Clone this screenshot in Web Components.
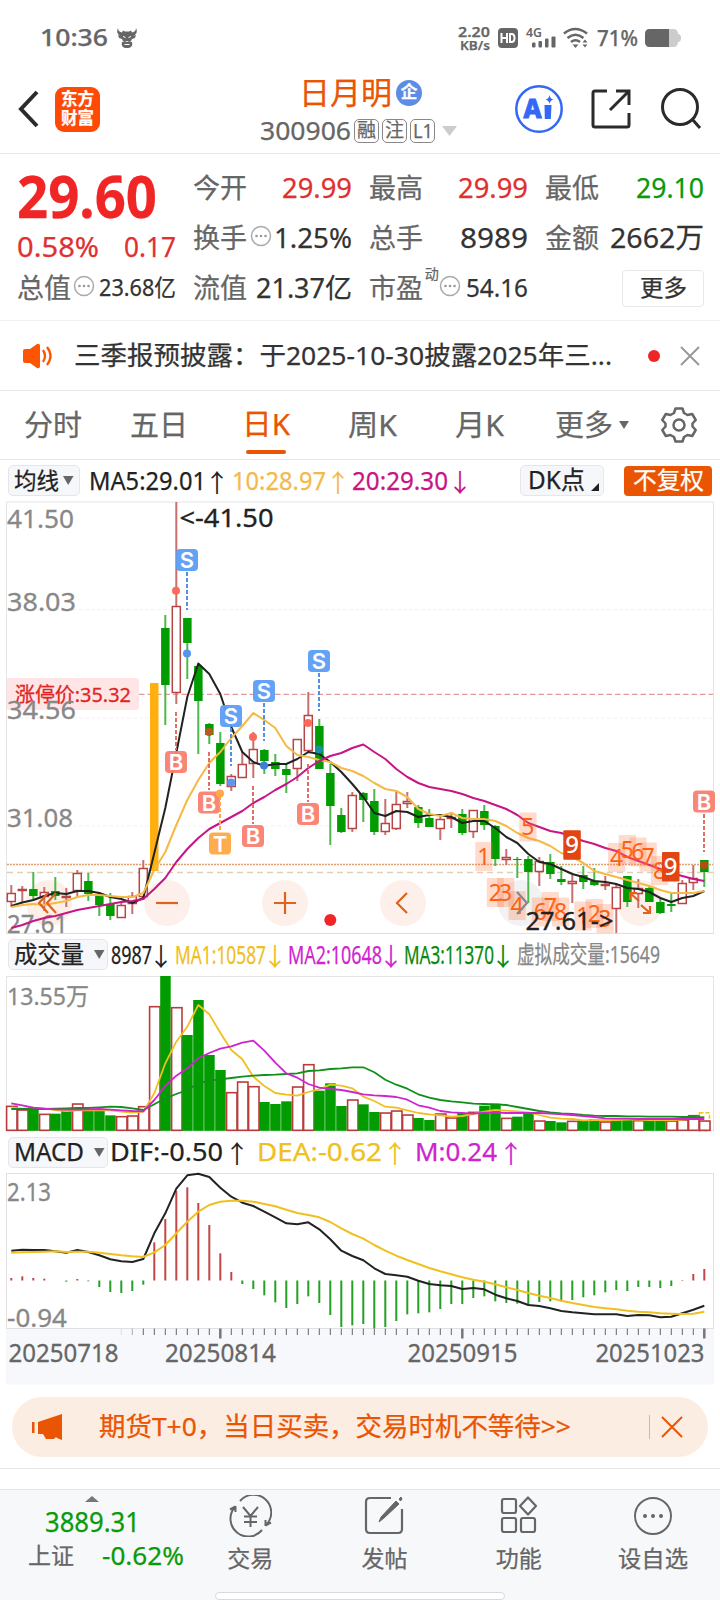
<!DOCTYPE html>
<html lang="zh-CN">
<head>
<meta charset="utf-8">
<title>日月明 300906</title>
<style>
  body {
    margin: 0;
    width: 720px;
    height: 1600px;
    overflow: hidden;
    background: #fff;
    color: #333;
    font-family: "Noto Sans", "Liberation Sans", "Noto Sans CJK SC", sans-serif;
    --red: #e03030;
    --green: #0a9a0a;
    --orange: #ea5504;
    --grey: #666;
    --line: #e6e6e6;
  }
</style>
</head>
<body>
<status-bar></status-bar>
<stock-header></stock-header>
<quote-panel></quote-panel>
<notice-bar></notice-bar>
<period-tabs></period-tabs>

<indicator-row style="height:41px">
  <pick-button w="72" caret="4"><fit-text w="45" s="23">均线</fit-text></pick-button>
  <fit-text w="117" s="26" ml="9">MA5:29.01</fit-text><trend-arrow ml="5">↑</trend-arrow>
  <fit-text w="94" s="26" ml="9" style="color:#f5b94a">10:28.97</fit-text><trend-arrow ml="6" style="color:#f5b94a">↑</trend-arrow>
  <fit-text w="96" s="26" ml="8" style="color:#c71585">20:29.30</fit-text><trend-arrow ml="6" style="color:#c71585">↓</trend-arrow>
  <pick-button w="84" style="margin-left:54px" corner><fit-text w="57" s="25" ml="2">DK点</fit-text></pick-button>
  <solid-button style="margin-left:20px"><fit-text w="71" s="24">不复权</fit-text></solid-button>
</indicator-row>
<k-chart></k-chart>

<indicator-row style="height:43px">
  <pick-button w="100" caret="10"><fit-text w="70" s="24">成交量</fit-text></pick-button>
  <fit-text w="41" s="26" ml="3">8987</fit-text><trend-arrow w="10" ml="4">↓</trend-arrow>
  <fit-text w="91" s="26" ml="9" style="color:#f0c020">MA1:10587</fit-text><trend-arrow w="10" ml="4" style="color:#f0c020">↓</trend-arrow>
  <fit-text w="94" s="26" ml="8" style="color:#cf25cf">MA2:10648</fit-text><trend-arrow w="10" ml="4" style="color:#cf25cf">↓</trend-arrow>
  <fit-text w="90" s="26" ml="8" style="color:#0a8a0a">MA3:11370</fit-text><trend-arrow w="10" ml="4" style="color:#0a8a0a">↓</trend-arrow>
  <fit-text w="143" s="24" ml="9" style="color:#888">虚拟成交量:15649</fit-text>
</indicator-row>
<volume-chart></volume-chart>

<indicator-row style="height:42px">
  <pick-button w="100" caret="10"><fit-text w="70" s="25">MACD</fit-text></pick-button>
  <fit-text w="113" s="26" ml="2">DIF:-0.50</fit-text><trend-arrow ml="8">↑</trend-arrow>
  <fit-text w="125" s="26" ml="14" style="color:#f0c020">DEA:-0.62</fit-text><trend-arrow ml="7" style="color:#f0c020">↑</trend-arrow>
  <fit-text w="82" s="26" ml="14" style="color:#cf25cf">M:0.24</fit-text><trend-arrow ml="8" style="color:#cf25cf">↑</trend-arrow>
</indicator-row>
<macd-chart></macd-chart>

<promo-banner></promo-banner>
<bottom-nav></bottom-nav>

<script>
// Registers an element whose shadow root is cloned from one template.
function define(name, html) {
  const tpl = document.createElement('template');
  tpl.innerHTML = html;
  customElements.define(name, class extends HTMLElement {
    constructor() {
      super();
      this.attachShadow({ mode: 'open' }).appendChild(tpl.content.cloneNode(true));
    }
  });
}

define('status-bar', `
  <style>
    :host { display: flex; align-items: center; box-sizing: border-box; height: 76px; padding: 0 39px 0 40px; color: #666; font-weight: 500; }
    svg { display: block; flex: none; overflow: visible; }
    .gap { flex: 1; }
    .rate { display: grid; justify-items: end; font-weight: 600; }
  </style>
  <fit-text w="68" s="24">10:36</fit-text>
  <svg width="22" height="22" viewBox="0 0 22 22" style="margin-left:8px" fill="#666">
    <path d="M2 1c0 3 2 4 4 4.500l1-2 2 1h4l2-1 1 2c2-.5 4-1.500 4-4.500 2 4 0 7-3 8l3-1-1 3-3 1-1 2H7l-1-2-3-1-1-3 3 1C2 8 0 5 2 1z"/>
    <path d="M6 15l3-1 2 1 2-1 3 1c1 4-1 6-5 6s-6-2-5-6z"/><path d="M7 9.500l2.500 1M15 9.500l-2.500 1M8.500 17.500h5" stroke="#fff"/>
  </svg>
  <div class="gap"></div>
  <div class="rate"><fit-text w="32" s="15" lh="16">2.20</fit-text><fit-text w="30" s="13" lh="13">KB/s</fit-text></div>
  <svg width="20" height="20" style="margin-left:8px"><rect width="20" height="20" rx="4" fill="#666"/>
    <path d="M3.500 5v10M9 5v10M3.500 10H9M12 6v8h1.500q3 0 3-4t-3-4z" stroke="#fff" stroke-width="2" fill="none"/></svg>
  <svg width="32" height="22" viewBox="0 0 32 22" style="margin-left:8px" fill="#666">
    <text x="0" y="10" font-size="13" font-weight="600" textLength="16" lengthAdjust="spacingAndGlyphs">4G</text>
    <rect x="6" y="15.500" width="3.500" height="5" rx="1"/><rect x="12.500" y="14" width="3.500" height="6.500" rx="1"/><rect x="19" y="11.500" width="3.500" height="9" rx="1"/><rect x="25.500" y="9.500" width="4" height="11" rx="1"/>
  </svg>
  <svg width="26" height="22" viewBox="0 0 26 22" style="margin-left:5px" fill="none" stroke="#666" stroke-width="2.600">
    <path d="M1 6.500q11-9 23 0M4.500 11q8-6.500 16 0M8 15q4.500-3.500 9 0"/><path d="M9.500 17.500h6l-3 3.500z" fill="#666" stroke="none"/><path d="M19.500 15.500h5l-2.500-3zM19.500 17.500h5l-2.500 3z" fill="#666" stroke="none"/>
  </svg>
  <fit-text w="41" s="22" ml="8">71%</fit-text>
  <svg width="36" height="18" style="margin-left:7px"><path d="M5 0h23q5 0 5 5 3 0 3 4t-3 4q0 5-5 5H5q-5 0-5-5V5q0-5 5-5z" fill="#ccc"/><path d="M5 0h19v18H5q-5 0-5-5V5q0-5 5-5z" fill="#666"/></svg>
`);

define('stock-header', `
  <style>
    :host { display: grid; grid-template-columns: 240px 1fr 210px; box-sizing: border-box; height: 78px; border-bottom: 1px solid var(--line); }
    .side { display: flex; align-items: center; height: 66px; }
    svg { display: block; flex: none; }
    .logo { display: grid; align-content: center; justify-content: center; width: 45px; height: 45px; margin-left: 16px; border-radius: 9px; background: #ff4a05; color: #fff; font-weight: 700; }
    .row { display: flex; align-items: center; }
    .name { height: 33px; color: var(--orange); }
    .code { height: 44px; color: var(--grey); }
    .chip { display: grid; place-items: center; box-sizing: border-box; width: 25px; height: 24px; margin-left: 3px; border: 1px solid #888; border-radius: 5px; }
    .badge { display: grid; place-items: center; width: 26px; height: 26px; margin-left: 4px; border-radius: 50%; background: #5b8ce6; color: #fff; font-weight: 700; }
  </style>
  <div class="side">
    <svg width="22" height="38" style="margin-left:17px"><path d="M20 2L4 19l16 17" fill="none" stroke="#2b2b2b" stroke-width="4"/></svg>
    <div class="logo"><fit-text w="33" s="17" lh="19">东方</fit-text><fit-text w="33" s="17" lh="19">财富</fit-text></div>
  </div>
  <div>
    <div class="row name"><fit-text w="93" s="31" ml="59">日月明</fit-text><div class="badge"><fit-text w="17" s="17">企</fit-text></div></div>
    <div class="row code"><fit-text w="91" s="25" ml="20">300906</fit-text>
      <div class="chip"><fit-text w="19" s="19">融</fit-text></div><div class="chip"><fit-text w="19" s="19">注</fit-text></div><div class="chip"><fit-text w="20" s="20">L1</fit-text></div>
      <svg width="16" height="11" style="margin-left:7px"><path d="M0 0h15L7.500 10z" fill="#ccc"/></svg></div>
  </div>
  <div class="side">
    <svg width="50" height="50" viewBox="0 0 50 50" style="margin-left:4px">
      <circle cx="25" cy="25" r="22.700" fill="none" stroke="#3567f5" stroke-width="2.500"/>
      <text x="9.500" y="34" font-size="27" font-weight="800" fill="#3567f5" stroke="#3567f5" textLength="18" lengthAdjust="spacingAndGlyphs">A</text>
      <path d="M30.500 21h7l-.7 14h-6z" fill="#3567f5"/><path d="M35.500 11q.7 4 4 4.500-3.300.5-4 4.500-.7-4-4-4.500 3.300-.5 4-4.500z" fill="#3567f5"/>
    </svg>
    <svg width="42" height="42" viewBox="0 0 42 42" style="margin-left:26px" fill="none" stroke="#2b2b2b" stroke-width="3">
      <path d="M17 3H5q-2 0-2 2v32q0 2 2 2h32q2 0 2-2V25M26 3h13v14M38 4L20 22"/></svg>
    <svg width="44" height="44" viewBox="0 0 44 44" style="margin-left:27px" fill="none" stroke="#2b2b2b" stroke-width="3">
      <circle cx="21" cy="20" r="17.500"/><path d="M33 32l8 9"/></svg>
  </div>
`);

define('more-dots', `
  <style>:host { display: block; flex: none; width: 22px; height: 22px; margin-top: -4px; } svg { display: block; }</style>
  <svg width="22" height="22" fill="#999"><circle cx="11" cy="11" r="9.500" fill="none" stroke="#aaa" stroke-width="1.500"/><circle cx="6.500" cy="11" r="1.300"/><circle cx="11" cy="11" r="1.300"/><circle cx="15.500" cy="11" r="1.300"/></svg>
`);

define('quote-panel', `
  <style>
    :host {
      display: grid; grid-template-columns: repeat(4, 159px); grid-template-rows: 50px 50px 50px; column-gap: 17px;
      box-sizing: border-box; height: 167px; padding: 9px 16px 0 17px; border-bottom: 1px solid #f0f0f0;
    }
    .cell { display: flex; align-items: center; justify-content: space-between; }
    .k { color: var(--grey); }
    .up { color: var(--red); }
    .down { color: var(--green); }
    .price { grid-row: span 2; display: flex; flex-direction: column; color: #f02525; }
    .change { display: flex; justify-content: space-between; color: var(--red); margin-top: 1px; }
    button { all: unset; display: grid; place-items: center; box-sizing: border-box; width: 83px; height: 37px; margin-left: 77px; border: 1px solid #e8e8e8; border-radius: 4px; }
    .dyn { align-self: flex-start; margin-top: 4px; margin-left: -3px; }
  </style>
  <div class="price"><fit-text w="140" s="59" lh="67" style="font-weight:700">29.60</fit-text>
    <div class="change"><fit-text w="82" s="28">0.58%</fit-text><fit-text w="52" s="28">0.17</fit-text></div></div>
  <div class="cell"><fit-text class="k" w="54" s="27">今开</fit-text><fit-text class="up" w="70" s="28">29.99</fit-text></div>
  <div class="cell"><fit-text class="k" w="54" s="27">最高</fit-text><fit-text class="up" w="70" s="28">29.99</fit-text></div>
  <div class="cell"><fit-text class="k" w="54" s="27">最低</fit-text><fit-text class="down" w="68" s="28">29.10</fit-text></div>
  <div class="cell"><fit-text class="k" w="54" s="27">换手</fit-text><more-dots></more-dots><fit-text w="78" s="28">1.25%</fit-text></div>
  <div class="cell"><fit-text class="k" w="54" s="27">总手</fit-text><fit-text w="68" s="28">8989</fit-text></div>
  <div class="cell"><fit-text class="k" w="54" s="27">金额</fit-text><fit-text w="94" s="28">2662万</fit-text></div>
  <div class="cell"><fit-text class="k" w="54" s="27">总值</fit-text><more-dots style="margin-left:-2px"></more-dots><fit-text w="77" s="23">23.68亿</fit-text></div>
  <div class="cell"><fit-text class="k" w="54" s="27">流值</fit-text><fit-text w="96" s="27">21.37亿</fit-text></div>
  <div class="cell"><fit-text class="k" w="54" s="27">市盈</fit-text><fit-text class="k dyn" w="14" s="14">动</fit-text><more-dots style="margin-left:-4px"></more-dots><fit-text w="62" s="26">54.16</fit-text></div>
  <div class="cell"><button><fit-text w="47" s="23">更多</fit-text></button></div>
`);

define('notice-bar', `
  <style>
    :host { display: flex; align-items: center; box-sizing: border-box; height: 70px; padding-left: 22px; border-bottom: 1px solid var(--line); }
    svg { display: block; }
    i { width: 12px; height: 12px; margin: 0 20px 0 36px; border-radius: 50%; background: #f02525; }
  </style>
  <svg width="32" height="26" viewBox="0 0 32 26"><path d="M3 6h5l7-5q3-1 3 2v20q0 3-3 2l-7-5H3q-2 0-2-2V8q0-2 2-2z" fill="#ff5500"/><path d="M21 7q4 6 0 12M25 4q7 9 0 18" fill="none" stroke="#ff5500" stroke-width="2.300"/></svg>
  <fit-text w="538" s="26" ml="20">三季报预披露：于2025-10-30披露2025年三...</fit-text>
  <i></i>
  <svg width="20" height="20"><path d="M1 1l18 18M19 1L1 19" stroke="#999" stroke-width="2"/></svg>
`);

define('period-tabs', `
  <style>
    :host { display: flex; align-items: center; box-sizing: border-box; height: 69px; border-bottom: 1px solid var(--line); color: var(--grey); }
    .on { display: grid; justify-items: center; color: var(--orange); }
    .on::after { content: ""; width: 40px; height: 4px; margin-top: 5px; margin-bottom: -9px; border-radius: 2px; background: var(--orange); }
    svg { display: block; }
  </style>
  <fit-text w="58" s="29" ml="24">分时</fit-text>
  <fit-text w="58" s="29" ml="48">五日</fit-text>
  <div class="on" style="margin-left:54px"><fit-text w="48" s="29" lh="40">日K</fit-text></div>
  <fit-text w="49" s="29" ml="58">周K</fit-text>
  <fit-text w="49" s="29" ml="58">月K</fit-text>
  <fit-text w="58" s="29" ml="51">更多</fit-text>
  <svg width="11" height="9" style="margin-left:6px"><path d="M0 0h10L5 8z" fill="#666"/></svg>
  <svg width="36" height="36" viewBox="-18 -18 36 36" style="margin-left:31px" fill="none" stroke="#666" stroke-width="2.500" stroke-linejoin="round">
    <path d="M-3.500-16.500h7l1.500 4.500 3.500 2 4.700-1 3.500 6-3.200 3.500v3l3.200 3.500-3.500 6-4.700-1-3.500 2-1.500 4.500h-7l-1.500-4.500-3.500-2-4.700 1-3.500-6 3.200-3.500v-3l-3.200-3.500 3.500-6 4.700 1 3.500-2z"/><circle r="5.500"/></svg>
`);

define('indicator-row', `
  <style>:host { display: flex; align-items: center; box-sizing: border-box; padding-left: 8px; color: #222; }</style>
  <slot></slot>
`);

customElements.define('pick-button', class extends HTMLElement {
  constructor() {
    super();
    const caret = this.getAttribute('caret');
    this.attachShadow({ mode: 'open' }).innerHTML = `
      <style>
        :host { display: flex; flex: none; align-items: center; box-sizing: border-box; width: ${this.getAttribute('w')}px; height: 31px; padding-left: 5px; border: 1px solid #e4e6ea; border-radius: 5px; background: #f6f7fa; }
        .corner { align-self: flex-end; margin: 0 0 4px 6px; }
      </style>
      <slot></slot>
      ${caret ? `<svg width="11" height="9" style="margin-left:${caret}px"><path d="M0 0h10.500L5.200 9z" fill="#666"/></svg>` : ''}
      ${this.hasAttribute('corner') ? '<svg class="corner" width="8" height="8"><path d="M8 0v8H0z" fill="#222"/></svg>' : ''}`;
  }
});

customElements.define('trend-arrow', class extends HTMLElement {
  constructor() {
    super();
    this.attachShadow({ mode: 'open' }).innerHTML = `
      <style>
        :host { display: flex; flex: none; justify-content: center; width: ${this.getAttribute('w') || 12}px; margin-left: ${this.getAttribute('ml')}px; font: 25px/28px "Noto Sans CJK SC", sans-serif; }
        span { flex: none; }
      </style><span><slot></slot></span>`;
  }
});

define('solid-button', `
  <style>:host { display: grid; place-items: center; width: 88px; height: 30px; border-radius: 4px; background: var(--orange); color: #fff; }</style>
  <slot></slot>
`);

// ---- charts: 64 days, 11px apart ----
const X = i => 11.3 + i * 11;
const line = (ys, color, w = 2) =>
  `<polyline points="${ys.map((y, i) => X(i).toFixed(1) + ',' + y).join(' ')}" fill="none" stroke="${color}" stroke-width="${w}" stroke-linejoin="round"/>`;
const label = (x, y, w, size, text, color = '#888') =>
  `<text x="${x}" y="${y}" font-size="${size}" fill="${color}" stroke="${color}" stroke-width=".3" textLength="${w}" lengthAdjust="spacingAndGlyphs">${text}</text>`;
const third = (base, list) => list.map(v => +(base + v / 3).toFixed(1));

function chart(name, top, height, draw) {
  customElements.define(name, class extends HTMLElement {
    constructor() {
      super();
      this.attachShadow({ mode: 'open' }).innerHTML = `
        <style>:host { display: block; height: ${height}px; } svg { display: block; overflow: visible; }</style>
        <svg width="720" height="${height}" viewBox="0 ${top} 720 ${height}">${draw()}</svg>`;
    }
  });
}

// colour, high, body top, body bottom, low
const candles = `r885,893,902,907 r886,889,891,902 g872,889,896,900 r887,892,897,911 g877,891,896,900 r888,896,897,907 r870,873,891,897 g873,881,894,901
g892,896,905,916 g893,904,916,920 r901,905,918,918 r892,896,904,914 r860,868,897,900 o683,683,871,871 g615,628,685,725 r502,606,693,704
g618,618,643,679 g666,666,701,754 g723,724,735,744 g732,743,784,786 r774,776,787,791 r752,764,778,778 r732,749,764,778 g749,750,761,774
g754,762,769,776 g765,769,775,793 r739,739,769,781 r692,715,751,753 g719,726,769,769 g764,773,806,845 g808,815,832,833 r792,795,829,832
g792,793,800,822 g789,801,832,835 r799,823,832,835 r792,804,829,830 r792,801,804,808 g805,807,823,828 g809,818,827,827 r816,819,829,840
r812,817,818,828 g809,814,833,835 r810,810,832,838 g805,811,825,830 g825,826,859,866 r849,857,860,865 g857,859,860,878 g856,859,872,903
r857,861,872,886 g854,862,874,879 g866,879,882,885 r875,881,884,903 g866,875,882,889 g868,881,885,886 r876,884,886,890 r884,887,909,933
g876,876,902,907 r879,888,894,908 g885,888,902,902 g899,902,913,914 g893,904,906,912 r880,883,904,904 r865,878,883,890 g860,860,872,887`.split(/\s+/);

const ma5 = [906,902.5,900,896,893,894,891,891,893,897,899,903,898,853,808,753,697,663.5,674,694,727,752,762,766,764,764,759,752,754,762,772,784,
  797,813,816,811,812,817,815,815,817,823,821,821,828,837,843,854,862,864,869,874,877,881,882,884,888,889,892,898,902,898,896,891];
const ma10 = [907,905,904,905,903,901,897,895,895,896,897,897,893,870,852,825,800,780,763,752,738,726,713,720,728,746,755,757,760,762,768,771,
  776,783,789,791,797,809,814,816,813,818,819,819,821,826,833,838,841,846,853,857,863,871,874,877,880,883,886,890,893,893,893,891];
const ma20 = [928,925,921,918,916,913,910,908,906,904,902,901,899,889,878,862,849,838,829,823,817,811,803,797,790,784,777,768,761,756,753,748,
  744.5,752,759,769,777,783,787,789,791,794,798,801,805,809,815,823,827,831,833,837,841,844,848,851,857,861,865,869,873,876,879,881];

function candle(s, i) {
  const [hi, top, bot, lo] = s.slice(1).split(',').map(Number);
  const x = X(i);
  if (s[0] === 'o') return `<rect x="${x - 4.3}" y="${top}" width="8.500" height="${bot - top}" fill="#ffb010"/>`;
  if (s[0] === 'g') return `<path d="M${x} ${hi}V${lo}" stroke="#4db84d" stroke-width="2"/><rect x="${x - 4.2}" y="${top}" width="8.500" height="${bot - top}" fill="#009c00"/>`;
  return `<path d="M${x} ${hi}V${top}M${x} ${bot}V${lo}" stroke="#c87070" stroke-width="2"/><rect x="${x - 4}" y="${top + .5}" width="8" height="${Math.max(1, bot - top - 1)}" fill="#fff" stroke="#b84545" stroke-width="1.500"/>`;
}

// letter badge with the dashed stem that ties it to its day
const badge = (t, x, y, y1, y2) => {
  const c = { S: '#5c9df5', B: '#fa7f70', T: '#ffa845' }[t];
  const d = { S: '#5590e0', B: '#e07065', T: '#ffa845' }[t];
  return `<path d="M${x} ${y1}V${y2}" stroke="${d}" stroke-width="2" stroke-dasharray="4 2"/>
    <rect x="${x - 11}" y="${y - 11}" width="22" height="22" rx="4" fill="${c}" fill-opacity=".95"/>
    <text x="${x}" y="${y + 8}" font-family="Inter, sans-serif" font-size="22" font-weight="600" fill="#fff" text-anchor="middle">${t}</text>`;
};
const dot = (x, y, c) => `<circle cx="${x}" cy="${y}" r="4" fill="${c}"/>`;
const count = (n, x, y) => `<rect x="${x}" y="${y}" width="17.300" height="29" rx="1" fill="#ff7a45" fill-opacity=".27"/>
  <text x="${x + 8.6}" y="${y + 22.5}" font-size="23" fill="#ff6010" text-anchor="middle">${n}</text>`;
const nine = (x, y) => `<rect x="${x}" y="${y}" width="17.500" height="29.500" rx="1" fill="#e24414"/>
  <text x="${x + 8.7}" y="${y + 23}" font-size="24" font-weight="500" fill="#fff" text-anchor="middle">9</text>`;
const disc = (x, c, icon) => `<circle cx="${x}" cy="903" r="23" fill="${c}"/><path d="${icon}" transform="translate(${x} 903)" fill="none" stroke="#e0621c" stroke-width="2.200"/>`;

chart('k-chart', 501, 432, () => `
  <path d="M6.500 933V502H713.500V933" fill="none" stroke="#e4e4e4"/><path d="M6 933.400H714" stroke="#ddd"/>
  <path d="M7 609.700H713M7 718H713M7 826H713" stroke="#f1f1f1" stroke-dasharray="4 2"/>
  ${disc(49, '#fdeee7', '')}${disc(167, '#fdf0ea', '')}${disc(285, '#fdf0ea', '')}${disc(403, '#fdf0ea', '')}${disc(640, '#fdf0ea', '')}
  <circle cx="521" cy="903" r="23" fill="#f2f2f2"/>
  <path d="M139 694.400H713" stroke="#e29a9a" stroke-width="1.300" stroke-dasharray="5.500 3"/>
  <path d="M7 864.500H713" stroke="#e0a070" stroke-width="1.300" stroke-dasharray="2 1"/>
  <path d="M7 872.500H713" stroke="#e0d0b8" stroke-width="1.300" stroke-dasharray="6 4"/>
  ${candles.map(candle).join('')}
  <rect x="6.500" y="678" width="132.500" height="32" rx="3" fill="#ffdcdc" fill-opacity=".75"/>
  ${label(15, 702, 116, 20.5, '涨停价:35.32', '#e02525')}
  ${label(7, 527.5, 67, 26, '41.50')}${label(7, 611, 69, 26, '38.03')}${label(7, 719, 69, 26, '34.56')}${label(7, 827, 66, 26, '31.08')}${label(7, 932.5, 61, 26, '27.61')}
  ${line(ma5, '#222')}${line(ma10, '#f5b945')}${line(ma20, '#c71585')}
  ${label(179.5, 527, 94, 26, '&lt;-41.50', '#222')}
  ${badge('S', 187, 560, 572, 610)}${badge('S', 319, 661, 673, 711)}${badge('S', 264, 691, 703, 741)}${badge('S', 231, 716, 728, 766)}
  ${badge('B', 176, 762, 712, 750)}${badge('B', 209, 802.5, 752, 790)}${badge('B', 253, 836, 786, 824)}${badge('B', 308, 814, 764, 802)}${badge('B', 704, 801.5, 814, 852)}${badge('T', 220, 843.5, 796, 831)}
  ${dot(187, 653.5, '#5595f0')}${dot(231, 782.5, '#5c95f5')}${dot(264, 765.5, '#3d80d8')}${dot(319, 749.5, '#1a90a0')}
  ${dot(176, 590.7, '#fa6a5a')}${dot(253, 737, '#fa6a5a')}${dot(308, 723, '#fa6a5a')}${dot(209, 732, '#b85a20')}${dot(704, 865, '#b84a18')}${dot(220, 793.5, '#ffa845')}
  ${[[1,475.3,842],[2,486.7,878],[3,497,878],[4,508.5,891],[5,519.3,812.500],[6,531.7,897.500],[7,541.7,892],[8,552,897.500],[1,574.3,901.500],[2,585.7,899],[3,596.3,904],
    [4,608,843],[5,618.7,835],[6,629.3,837.500],[7,639.5,842.500],[8,651,856]].map(a => count(...a)).join('')}
  ${nine(563.3, 830.3)}${nine(662, 852)}
  <path d="M517 892l10 11-10 11" fill="none" stroke="#888" stroke-width="2.200"/>
  ${disc(49, 'none', 'M-1-10L-10 0-1 10M7-10L-2 0 7 10')}${disc(167, 'none', 'M-11 0H11')}${disc(285, 'none', 'M-11 0H11M0-11V11')}${disc(403, 'none', 'M4-10L-6 0 4 10')}
  ${disc(640, 'none', 'M-10-3V-10H-3M-10-10L-1-2M1 2L10 10M3 10H10V3')}
  ${label(525.5, 929.5, 88, 26, '27.61-&gt;', '#222')}
  <circle cx="330.300" cy="920" r="6" fill="#f02525"/>
`);

const volumes = `r527 r538 g531 r551 g551 g541 r520 g541 g541 g556 r558 r556 r528 r228 g138 r231 g315 g210 g375 g420 r486 r454 r468 g516 g522 g514 r469 r402 g482 g460 g528 r508
g523 g546 r547 r541 r553 g564 g570 r550 r562 g549 r545 g527 g521 r563 g560 g550 r571 g573 g577 r572 g571 g567 r574 g570 g568 r570 g569 g570 r571 r568 r555 r571`.split(/\s+/);
const vma1 = [532,536,533,535,540,543,541,541,541,541,545,548,545,490,400,335,290,225,253,308,360,388,440,468,489,494,497,486,478,464,467,475,
  500,513,530,533,541,549,553,556,560,558,552,545,540,542,544,547,555,563,566,567,571,570,570,570,569,569,570,570,570,569,566,562];
const vma2 = [520,526,533,536,538,539,539,538,537,539,541,543,544,510,468,437,415,385,369,356,349,338,332,362,398,430,443,462,473,477,480,486,
  493,496,498,501,509,526,533,543,547,549,551,548,548,549,549,549,549,551,553,555,558,561,565,566,566,567,567,567,567,567,567,567];
const vma3 = [537,537,537,537,536,535,534,534,532,530,531,535,540,523,505,492,480,460,452,448,444,440,437,435,434,432,430,423,421,417,415,412,
  412,427,449,464,476,493,503,510,514,517,521,522,523,525,531,537,543,547,550,552,555,557,558,558,559,559,560,560,560,561,561,562];

chart('volume-chart', 976, 155, () => `
  <path d="M6.500 1131V976.500H713.500V1131" fill="none" stroke="#e4e4e4"/><path d="M6 1130.800H714" stroke="#ddd"/>
  ${label(7, 1005, 82, 24, '13.55万')}
  <rect x="699.500" y="1112.700" width="10" height="18" fill="none" stroke="#f0c020" stroke-width="1.500" stroke-dasharray="4 2"/>
  ${volumes.map((s, i) => {
    const y = 930 + s.slice(1) / 3;
    return s[0] === 'g'
      ? `<rect x="${X(i) - 5.1}" y="${y}" width="10.500" height="${1130.800 - y}" fill="#009c00"/>`
      : `<rect x="${X(i) - 4.7}" y="${y + .7}" width="10.400" height="${1129.600 - y}" fill="#fff" stroke="#b83c3c" stroke-width="1.600"/>`;
  }).join('')}
  ${line(third(930, vma1), '#f0c020', 1.8)}${line(third(930, vma3), '#10901a', 1.8)}${line(third(930, vma2), '#cf25cf', 1.8)}
`);

const hist = [354,349,354,356,361,365,357,364,381,396,399,393,374,247,177,93,82,129,195,280,336,372,387,406,427,444,432,409,429,465,501,496,
  492,505,501,483,463,460,457,447,432,432,414,409,424,429,431,435,426,424,424,420,412,406,397,390,393,381,381,384,378,360,342,327];
const dif = [272,269,270,270,274,278,270,276,286,298,304,306,297,220,160,86,46,41,51,83,110,128,138,155,172,190,193,187,208,238,272,288,
  301,325,342,346,350,362,372,376,378,387,384,388,404,415,423,435,438,445,453,457,460,463,463,463,468,465,466,472,470,460,449,437];
const dea = [278,277,276,275,274,276,275,275,278,282,286,289,291,277,255,220,185,155,135,125,122,122,125,132,139,149,159,165,172,186,205,222,
  236,255,272,287,300,312,324,334,343,352,359,365,373,382,390,399,407,414,422,429,435,441,445,448,452,455,457,460,461,462,461,455];

chart('macd-chart', 1173, 224, () => {
  let ticks = '';
  for (let i = 10; i < 64; i++) {
    ticks += i % 22 === 19
      ? `<path d="M${X(i)} 1328.500V1338.500" stroke="#777" stroke-width="2.500"/>`
      : `<path d="M${X(i)} 1328.500V1335" stroke="${i === 10 ? '#ddd' : i === 11 ? '#aaa' : '#666'}"/>`;
  }
  return `
  <rect x="6" y="1328.500" width="708" height="56" fill="#f7f8fb"/>
  <path d="M6.500 1328.500V1173.500H713.500V1328.500Z" fill="#fff" stroke="#e0e0e0"/>
  ${label(7, 1201, 44, 24.5, '2.13')}${label(7, 1327, 60, 24.5, '-0.94')}
  ${hist.map((v, i) => v === 361 ? '' : `<path d="M${X(i)} 1280.500V${1160 + v / 3}" stroke="${v < 361 ? '#c54545' : '#25a025'}" stroke-width="2"/>`).join('')}
  ${line(third(1160, dif), '#222')}${line(third(1160, dea), '#f0c020')}
  ${ticks}
  ${label(8.5, 1362, 110, 24.5, '20250718', '#666')}${label(165, 1362, 111, 24.5, '20250814', '#666')}${label(407.5, 1362, 110, 24.5, '20250915', '#666')}${label(595.5, 1362, 109, 24.5, '20251023', '#666')}`;
});

define('promo-banner', `
  <style>
    :host { display: block; height: 92px; box-sizing: border-box; }
    .pill { display: flex; align-items: center; box-sizing: border-box; height: 60px; margin: 0 12px; padding-left: 20px; border-radius: 30px; background: #fcede3; color: var(--orange); }
    .rule { height: 11px; border-bottom: 1px solid var(--line); }
    i { width: 1px; height: 24px; margin-left: 78px; background: #e8b090; }
    svg { display: block; }
  </style>
  <div class="pill">
    <svg width="31" height="28" viewBox="0 0 31 28" fill="#ea5504"><path d="M0 9h2.500v11H0zM6 9L30 1v26l-5-2-1-1-2 2h-8l-3-5H6z"/></svg>
    <fit-text w="472" s="26" ml="36">期货T+0，当日买卖，交易时机不等待&gt;&gt;</fit-text>
    <i></i>
    <svg width="22" height="22" style="margin-left:11px"><path d="M1 1l20 20M21 1L1 21" stroke="#ea5504" stroke-width="2"/></svg>
  </div>
  <div class="rule"></div>
`);

define('nav-item', `
  <style>:host { display: grid; justify-items: center; align-content: start; gap: 9px; padding-top: 5px; } ::slotted(svg) { display: block; }</style>
  <slot name="icon"></slot><slot></slot>
`);

define('bottom-nav', `
  <style>
    :host { display: block; box-sizing: border-box; height: 111px; border-top: 1px solid #e2e4e6; background: #f6f8fa; color: var(--grey); }
    .bar { display: grid; grid-template-columns: 183px repeat(4, 134.300px); height: 102px; }
    .index { display: grid; align-content: start; justify-items: center; padding-top: 6px; color: var(--green); }
    .index div { display: flex; margin-left: 28px; }
    .home { box-sizing: border-box; width: 290px; height: 8px; margin: 0 auto; border: 1px solid #d8dade; border-radius: 5px; background: #fff; }
  </style>
  <div class="bar">
    <div class="index">
      <svg width="14" height="6"><path d="M0 6l7-6 7 6z" fill="#777"/></svg>
      <fit-text w="95" s="27" lh="41">3889.31</fit-text>
      <div><fit-text w="46" s="23" lh="27" style="color:#666">上证</fit-text><fit-text w="82" s="26" lh="27" ml="28">-0.62%</fit-text></div>
    </div>
    <nav-item><svg slot="icon" width="44" height="42" viewBox="0 0 44 42" fill="none" stroke="#666" stroke-width="2">
      <path d="M12 6A17.500 17.500 0 0 1 39 29M37.500 31v-6M37.500 30.500l5.500-3M34 35A17.500 17.500 0 0 1 6.500 12.500M7.500 11v6M7.500 11.500L2 14.500M15 12l7.500 9 7.500-9M22.500 21v11M16 21.500h13M16 27h13"/></svg><fit-text w="46" s="23">交易</fit-text></nav-item>
    <nav-item><svg slot="icon" width="40" height="42" viewBox="0 0 40 42" fill="none" stroke="#666" stroke-width="2.200">
      <path d="M27 3H6Q2 3 2 7v27q0 4 4 4h28q4 0 4-4V14"/><path d="M15 27l2-5L32 6l3 3-15 14zM35 4l2-2 1 2-1.500 2z" fill="#666" stroke-width="1"/></svg><fit-text w="46" s="23">发帖</fit-text></nav-item>
    <nav-item><svg slot="icon" width="38" height="42" viewBox="0 0 38 42" fill="none" stroke="#666" stroke-width="2.200">
      <rect x="2" y="4" width="14" height="14" rx="2"/><rect x="2" y="23" width="14" height="14" rx="2"/><rect x="21" y="23" width="14" height="14" rx="2"/><path d="M28 2.500l8 8.500-8 8.500-8-8.500z" stroke-linejoin="round"/></svg><fit-text w="46" s="23">功能</fit-text></nav-item>
    <nav-item><svg slot="icon" width="40" height="42" viewBox="0 0 40 42" fill="none" stroke="#666" stroke-width="2"><circle cx="20" cy="21" r="18"/>
      <g fill="#666" stroke="none"><circle cx="12" cy="21" r="2"/><circle cx="20" cy="21" r="2"/><circle cx="28" cy="21" r="2"/></g></svg><fit-text w="70" s="23">设自选</fit-text></nav-item>
  </div>
  <div class="home"></div>
`);

// Text squeezed or stretched to an exact width. Registered last, so that
// every host above has its fonts applied by the time this one measures.
customElements.define('fit-text', class extends HTMLElement {
  constructor() {
    super();
    const s = Number(this.getAttribute('s'));
    const lh = this.getAttribute('lh') || Math.round(s * 1.15);
    this.attachShadow({ mode: 'open' }).innerHTML = `
      <style>
        :host { display: block; flex: none; width: ${this.getAttribute('w')}px; margin-left: ${this.getAttribute('ml') || 0}px; height: ${lh}px; font-size: ${s}px; line-height: ${lh - 2}px; white-space: nowrap; -webkit-text-stroke: .25px currentColor; }
        span { display: inline-block; transform-origin: 0 50%; }
      </style><span><slot></slot></span>`;
  }
  connectedCallback() {
    const span = this.shadowRoot.querySelector('span');
    const w = span.getBoundingClientRect().width;
    if (w) span.style.transform = `scaleX(${this.getAttribute('w') / w})`;
  }
});
</script>
</body>
</html>
